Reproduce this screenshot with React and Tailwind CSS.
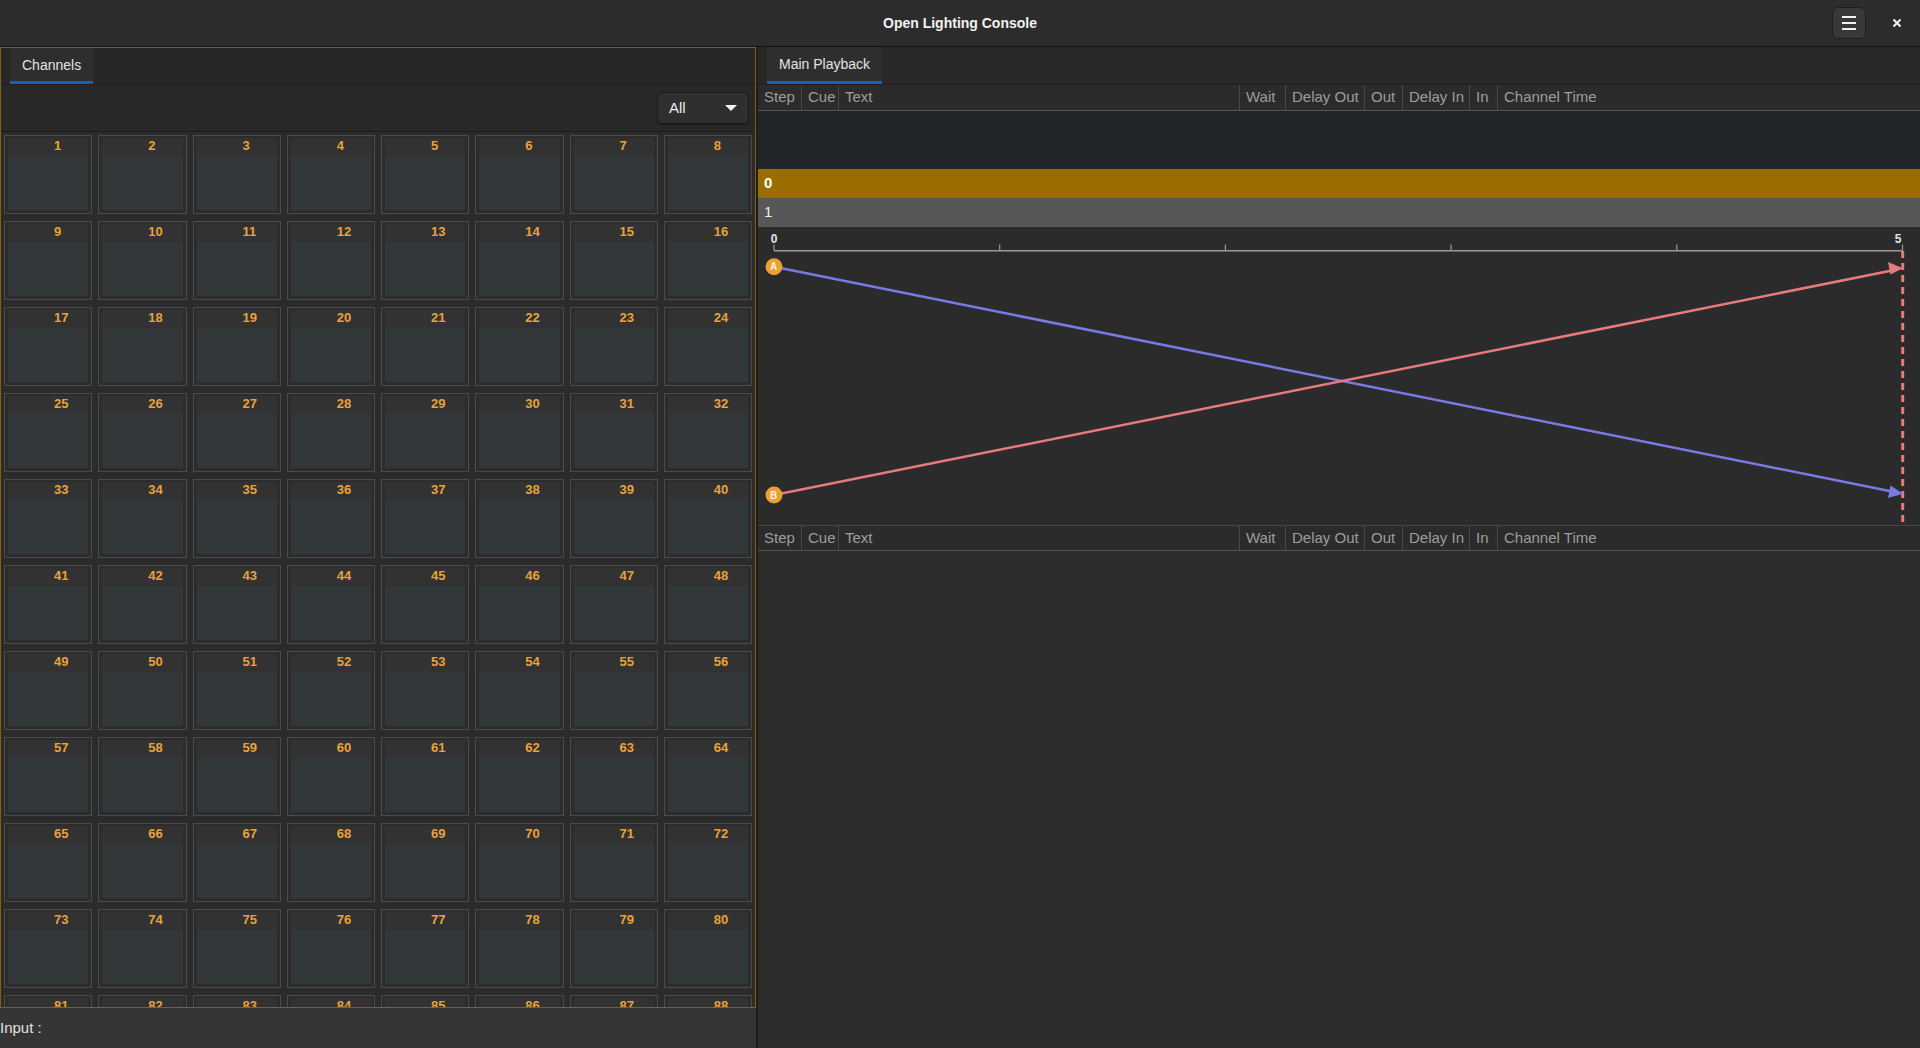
import React from 'react';

const FONT = { fontFamily: '"Liberation Sans", Arial, sans-serif' };

const columns = [
  { label: 'Step', w: 'w-[44px]' },
  { label: 'Cue', w: 'w-[37px]' },
  { label: 'Text', w: 'w-[401px]' },
  { label: 'Wait', w: 'w-[46px]' },
  { label: 'Delay Out', w: 'w-[79px]' },
  { label: 'Out', w: 'w-[38px]' },
  { label: 'Delay In', w: 'w-[67px]' },
  { label: 'In', w: 'w-[28px]' },
  { label: 'Channel Time', w: 'flex-1' },
];

function TableHeader({ top }) {
  return (
    <div className={`flex h-[26px] shrink-0 items-center border-b border-[#555555] bg-[#2b2b2b] ${top ? '' : 'border-t border-t-[#464646]'}`}>
      {columns.map((c, i) => (
        <div
          key={c.label}
          className={`${c.w} flex h-full items-center pl-[6px] text-[15px] text-[#9d9d9d] ${i < columns.length - 1 ? 'border-r border-[#474747]' : ''}`}
        >
          {c.label}
        </div>
      ))}
    </div>
  );
}

function Tab({ label }) {
  return (
    <div className="ml-[9px] flex h-full flex-col bg-[#2e2e2e]">
      <div className="flex flex-1 items-center px-[12px] pt-[1px] text-[14px] text-[#e4e4e4]">{label}</div>
      <div className="h-[3px] bg-[#1d5db4]" />
    </div>
  );
}

function ChannelCell({ n }) {
  return (
    <div className="flex h-[79px] flex-col border border-[#4b4b4b] bg-[#2c2c2c] px-[3px] pt-[2px] pb-[3px]">
      <div className="h-[18px] shrink-0 bg-[#323232] pl-[46px] text-[13px] font-bold leading-[15px] text-[#e9a23b]">
        {n}
      </div>
      <div className="flex-1 bg-[#32373a]" />
    </div>
  );
}

function Chart() {
  const ticks = [16, 241.7, 467.4, 693.1, 918.8, 1144.5];
  return (
    <svg width="1162" height="298" viewBox="0 0 1162 298" className="block">
      <line x1="16" y1="23.7" x2="1144.7" y2="23.7" stroke="#9b9b9b" strokeWidth="1.5" />
      {ticks.map((x) => (
        <line key={x} x1={x} y1="17.5" x2={x} y2="23.7" stroke="#9b9b9b" strokeWidth="1.2" />
      ))}
      <text x="16" y="15.5" textAnchor="middle" fontSize="12" fontWeight="bold" fill="#dde7f2" style={FONT}>0</text>
      <text x="1140" y="15.5" textAnchor="middle" fontSize="12" fontWeight="bold" fill="#dde7f2" style={FONT}>5</text>
      <line x1="1144.7" y1="24" x2="1144.7" y2="298" stroke="#e57b7b" strokeWidth="3" strokeDasharray="7 5" />
      <line x1="16" y1="39.7" x2="1134" y2="264.5" stroke="#7a7ae6" strokeWidth="2.5" />
      <polygon points="1145,266.7 1132.5,258.6 1130,271" fill="#7a7ae6" />
      <line x1="16" y1="268" x2="1134" y2="43.5" stroke="#e57b7b" strokeWidth="2.5" />
      <polygon points="1145,41.3 1130,35 1132.5,47.4" fill="#e57b7b" />
      <circle cx="16" cy="39.7" r="8.5" fill="#eba033" />
      <text x="15.5" y="43.2" textAnchor="middle" fontSize="10" fontWeight="bold" fill="#f6f0e6" style={FONT}>A</text>
      <circle cx="16" cy="268" r="8.5" fill="#eba033" />
      <text x="15.5" y="271.5" textAnchor="middle" fontSize="10" fontWeight="bold" fill="#f6f0e6" style={FONT}>B</text>
    </svg>
  );
}

export default function App() {
  const channels = Array.from({ length: 96 }, (_, i) => i + 1);

  return (
    <div className="flex h-[1048px] w-[1920px] flex-col overflow-hidden bg-[#2b2b2b]" style={FONT}>
      {/* Title bar */}
      <div className="relative flex h-[47px] shrink-0 items-center justify-center border-b border-[#121212] bg-[#2c2c2c]">
        <span className="text-[14px] font-bold text-[#f2f2f2]">Open Lighting Console</span>
        <div className="absolute right-[10px] top-[7px] flex items-center gap-[26px]">
          <button className="flex h-[32px] w-[34px] flex-col items-center justify-center gap-[4px] rounded-[6px] border border-[#1e1e1e] bg-[#383838]">
            <span className="block h-[2px] w-[14px] bg-[#f0f0f0]" />
            <span className="block h-[2px] w-[14px] bg-[#f0f0f0]" />
            <span className="block h-[2px] w-[14px] bg-[#f0f0f0]" />
          </button>
          <svg width="10" height="10" viewBox="0 0 10 10" className="mr-[8px]">
            <path d="M1.5 1.5 L8.5 8.5 M8.5 1.5 L1.5 8.5" stroke="#f2f2f2" strokeWidth="2" />
          </svg>
        </div>
      </div>

      <div className="flex min-h-0 flex-1">
        {/* Channels panel */}
        <div className="flex w-[756px] shrink-0 flex-col">
          <div className="flex min-h-0 flex-1 flex-col border border-[#87600a] bg-[#2b2b2b]">
            <div className="flex h-[37px] shrink-0 border-b border-[#1e1e1e] bg-[#272727]">
              <div className="h-full">
                <Tab label="Channels" />
              </div>
            </div>
            <div className="flex h-[47px] shrink-0 items-center justify-end border-b border-[#1b1b1b] bg-[#282828] pr-[6px]">
              <div className="flex h-[32px] w-[92px] items-center justify-between rounded-[5px] border border-[#1b1b1b] bg-[#2f2f2f] pl-[11px] pr-[11px] shadow-[0_1px_1px_rgba(0,0,0,0.4)]">
                <span className="text-[15px] text-[#ececec]">All</span>
                <svg width="12" height="6" viewBox="0 0 12 6">
                  <polygon points="0,0 12,0 6,6" fill="#f2f2f2" />
                </svg>
              </div>
            </div>
            <div className="min-h-0 flex-1 overflow-hidden">
              <div className="grid grid-cols-8 gap-x-[6px] gap-y-[7px] px-[3px] pt-[3px]">
                {channels.map((n) => (
                  <ChannelCell key={n} n={n} />
                ))}
              </div>
            </div>
          </div>
          <div className="flex h-[40px] shrink-0 items-center bg-[#353535] text-[15px] text-[#e2e2e2]">Input :</div>
        </div>

        <div className="w-[2px] shrink-0 bg-[#1c1c1c]" />

        {/* Main playback panel */}
        <div className="flex min-w-0 flex-1 flex-col bg-[#2b2b2b]">
          <div className="flex h-[38px] shrink-0 border-b border-[#1e1e1e] bg-[#282828]">
            <Tab label="Main Playback" />
          </div>
          <TableHeader top />
          <div className="h-[58px] shrink-0 bg-[#232629]" />
          <div className="flex h-[29px] shrink-0 items-center bg-[#9a6d00] pl-[6px] text-[15px] font-bold text-white">0</div>
          <div className="flex h-[29px] shrink-0 items-center bg-[#575757] pl-[6px] text-[15px] text-[#f0f0f0]">1</div>
          <div className="h-[298px] shrink-0 bg-[#2b2b2b]">
            <Chart />
          </div>
          <TableHeader />
          <div className="flex-1 bg-[#2c2c2c]" />
        </div>
      </div>
    </div>
  );
}
